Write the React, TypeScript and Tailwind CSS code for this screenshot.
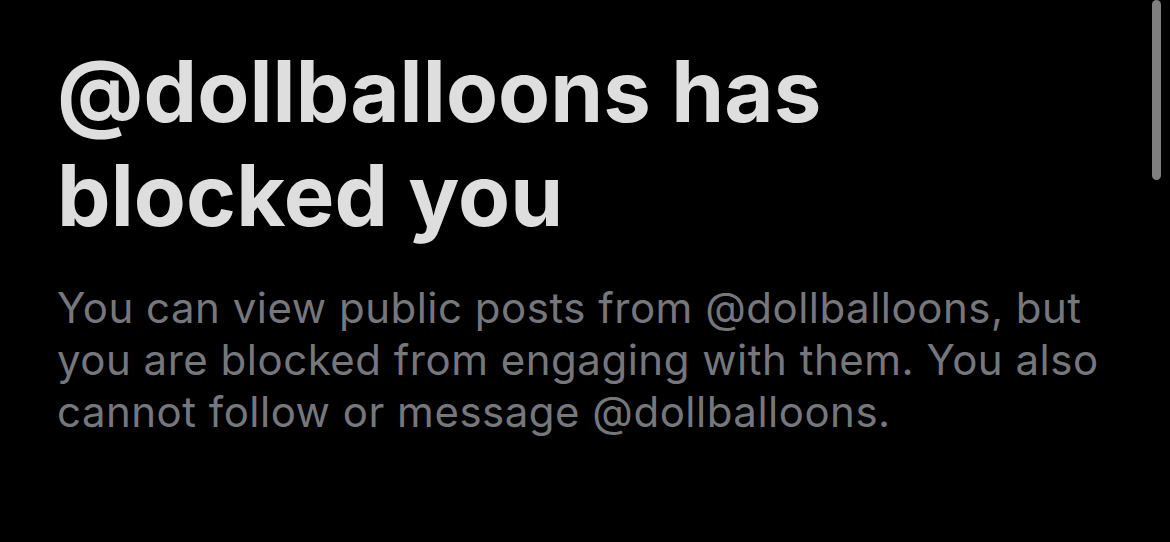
export default function App() {
  return (
    <div className="relative w-[1170px] h-[542px] overflow-hidden bg-black" style={{ fontFamily: 'Inter, "Noto Sans", sans-serif' }}>
      <div className="pl-[57px] pr-[50px] pt-[40px]">
        <h1 className="text-[85px] leading-[104px] font-bold text-[#dedede] tracking-[0.1px]">
          @dollballoons has blocked you
        </h1>
        <p className="mt-[34px] text-[42px] leading-[52px] text-[#76777c] tracking-[0.5px]">
          You can view public posts from @dollballoons, but you are blocked from engaging with them. You also cannot follow or message @dollballoons.
        </p>
      </div>
      {/* scroll indicator */}
      <div className="absolute right-[9px] top-0 w-[9px] h-[180px] rounded-full bg-[#7f7f7f]" />
    </div>
  );
}
